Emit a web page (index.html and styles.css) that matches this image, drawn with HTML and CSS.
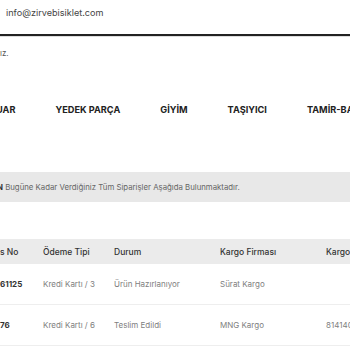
FILE: index.html
```html
<!DOCTYPE html>
<html lang="tr">
<head>
<meta charset="utf-8">
<link rel="stylesheet" href="styles.css">
</head>
<body>
<header class="topbar">
  <span class="email">info@zirvebisiklet.com</span>
</header>
<p class="note">ız.</p>
<nav class="menu">
  <a class="menu-item">UAR</a>
  <a class="menu-item">YEDEK PARÇA</a>
  <a class="menu-item">GİYİM</a>
  <a class="menu-item">TAŞIYICI</a>
  <a class="menu-item">TAMİR-BAKIM</a>
</nav>
<div class="banner"><span class="banner-text"><b>N</b> Bugüne Kadar Verdiğiniz Tüm Siparişler Aşağıda Bulunmaktadır.</span></div>
<div class="orders">
  <div class="row head">
    <span>s No</span><span>Ödeme Tipi</span><span>Durum</span><span>Kargo Firması</span><span>Kargo Takip No</span>
  </div>
  <div class="row">
    <span class="id">61125</span><span>Kredi Kartı / 3</span><span>Ürün Hazırlanıyor</span><span>Sürat Kargo</span><span></span>
  </div>
  <div class="row">
    <span class="id">76</span><span>Kredi Kartı / 6</span><span>Teslim Edildi</span><span>MNG Kargo</span><span>8141400000</span>
  </div>
</div>
</body>
</html>
```
FILE: styles.css
```css
html, body {
  margin: 0;
  padding: 0;
  overflow: hidden;
  background: #fff;
  font-family: Inter, "Liberation Sans", sans-serif;
}
.topbar {
  height: 34px;
  padding-left: 6px;
  display: flex;
  align-items: flex-start;
  border-bottom: 2px solid #222;
  box-shadow: 0 1px 0 #ddd;
  box-sizing: border-box;
  padding-top: 7px;
  height: 36px;
}
.email {
  font-size: 9.1px;
  line-height: 12px;
  color: #444;
}
.note {
  margin: 0;
  padding-top: 12px;
  font-size: 8px;
  color: #555;
  line-height: 10px;
}
.menu {
  display: flex;
  gap: 40px;
  margin-top: 44px;
  margin-left: -4px;
  height: 14px;
  align-items: center;
  white-space: nowrap;
}
.menu-item {
  font-size: 9.2px;
  font-weight: 700;
  color: #222;
}
.banner {
  margin-top: 56px;
  height: 30px;
  display: flex;
  align-items: center;
  background: #e8e8e8;
  font-size: 7.8px;
  color: #666;
  white-space: nowrap;
}
.banner-text {
  margin-left: -3px;
}
.banner b {
  color: #333;
}
.orders {
  margin-top: 37px;
}
.row {
  display: grid;
  grid-template-columns: 43px 71px 106px 106px 1fr;
  height: 40px;
  align-items: center;
  border-bottom: 1px solid #eee;
  font-size: 8px;
  color: #808080;
  white-space: nowrap;
}
.row.head {
  height: 25px;
  background: #ebebeb;
  border-bottom: none;
  font-size: 8.5px;
  font-weight: 500;
  color: #333;
}
.id {
  font-weight: 700;
  color: #333;
}
```
